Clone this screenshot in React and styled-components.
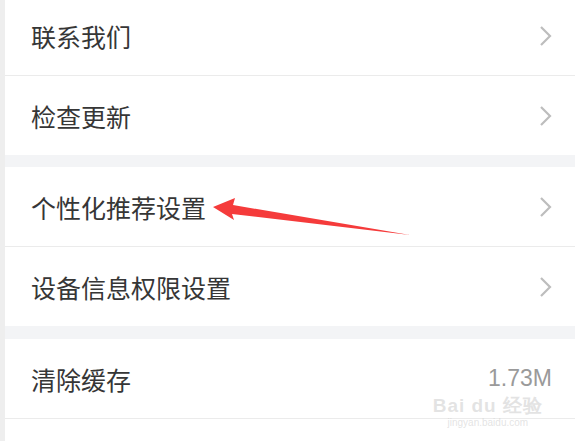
import styled, { createGlobalStyle } from "styled-components";

const Global = createGlobalStyle`
  body {
    margin: 0;
    background: #ffffff;
    font-family: "Noto Sans CJK SC", "Noto Sans", sans-serif;
  }
`;

const Page = styled.div`
  position: relative;
  width: 575px;
  height: 441px;
  overflow: hidden;
  border-left: 5px solid #eeeeee;
  box-sizing: border-box;
  background: #ffffff;
`;

const List = styled.div`
  margin-top: -4px;
`;

const Section = styled.div`
  background: #ffffff;
`;

const Gap = styled.div`
  height: ${(p) => p.size}px;
  background: #f3f4f6;
`;

const Row = styled.div`
  height: 79px;
  display: flex;
  align-items: center;
  justify-content: space-between;
  padding: 0 22px 0 26px;
  border-bottom: ${(p) => (p.last ? "none" : "1px solid #ebebeb")};
`;

const Label = styled.span`
  font-size: 25px;
  color: #363636;
`;

const Value = styled.span`
  font-family: "Liberation Sans", Arial, sans-serif;
  font-size: 23px;
  color: #9a9a9a;
  margin-right: 1px;
`;

const Chevron = () => (
  <svg width="14" height="22" viewBox="0 0 14 22">
    <path d="M2 2 L11 11 L2 20" fill="none" stroke="#bdbdbd" strokeWidth="2.2" />
  </svg>
);

const Overlay = styled.svg`
  position: absolute;
  left: -5px;
  top: 0;
  pointer-events: none;
`;

const Watermark = styled.div`
  position: absolute;
  right: 32px;
  bottom: 12px;
  text-align: center;
  color: rgba(200, 200, 200, 0.5);
  font-family: "Liberation Sans", Arial, sans-serif;
  pointer-events: none;
`;

const Mark = styled.div`
  font-size: 19px;
  line-height: 22px;
  font-weight: 700;
  letter-spacing: 1px;
`;

const Url = styled.div`
  font-size: 10px;
  line-height: 12px;
`;

const groups = [
  { gap: 0, rows: [{ label: "联系我们" }, { label: "检查更新" }] },
  { gap: 12, rows: [{ label: "个性化推荐设置" }, { label: "设备信息权限设置" }] },
  { gap: 13, rows: [{ label: "清除缓存", value: "1.73M" }, { label: "" }] },
];

export default function App() {
  return (
    <>
      <Global />
      <Page>
        <List>
          {groups.map((g, gi) => (
            <div key={gi}>
              {g.gap > 0 && <Gap size={g.gap} />}
              <Section>
                {g.rows.map((r, ri) => (
                  <Row key={ri} last={gi < 2 && ri === g.rows.length - 1}>
                    <Label>{r.label}</Label>
                    {r.value ? <Value>{r.value}</Value> : r.label && <Chevron />}
                  </Row>
                ))}
              </Section>
            </div>
          ))}
        </List>
        <Watermark>
          <Mark>Bai du 经验</Mark>
          <Url>jingyan.baidu.com</Url>
        </Watermark>
        <Overlay width="575" height="441">
          <polygon
            points="213,207 235,198 233,205 410,235 232,214 234,220"
            fill="#f53b3b"
          />
        </Overlay>
      </Page>
    </>
  );
}
